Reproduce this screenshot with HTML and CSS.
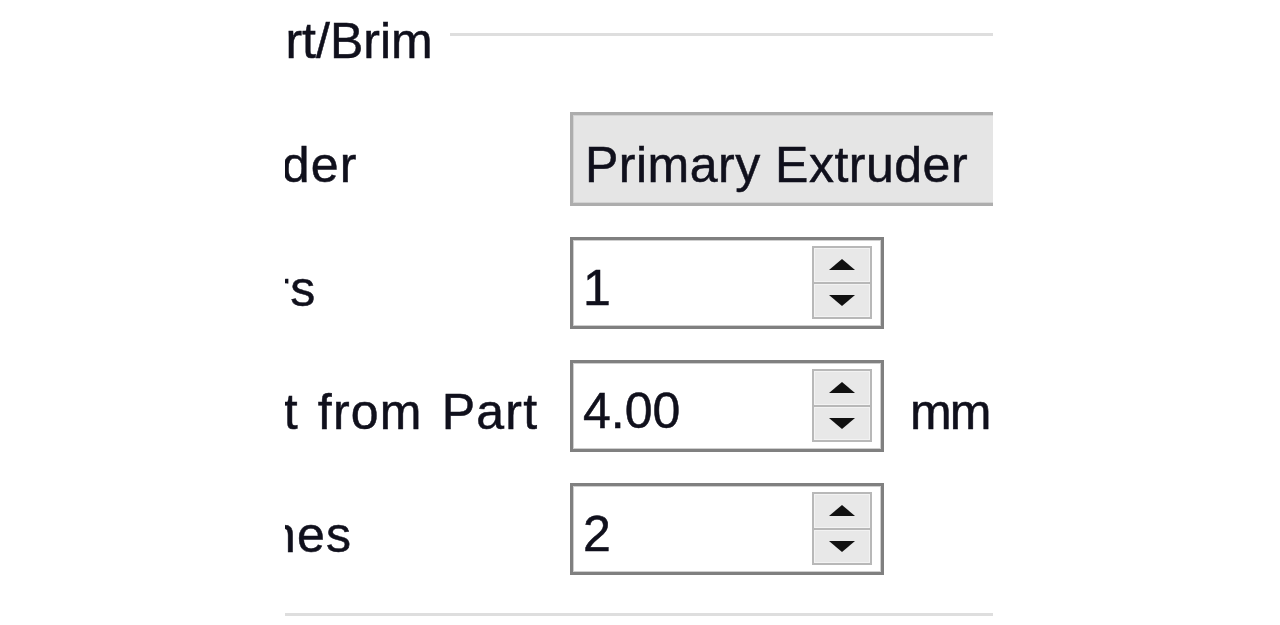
FILE: index.html
```html
<!DOCTYPE html>
<html lang="en">
<head>
    <meta charset="UTF-8">
    <title>Skirt/Brim</title>
    <link rel="stylesheet" href="styles.css">
</head>
<body>
    <div class="viewport">
        <div class="group">
            <div class="group__title">
                <span class="group__label">Skirt/Brim</span>
                <div class="group__rule"></div>
            </div>

            <div class="form">
                <div class="form__label">Skirt Extruder</div>
                <div class="combo">Primary Extruder</div>

                <div class="form__label">Skirt Layers</div>
                <div class="spin">
                    <div class="spin__value">1</div>
                    <div class="spin__buttons">
                        <div class="spin__btn"><span class="arrow arrow--up"></span></div>
                        <div class="spin__btn"><span class="arrow arrow--down"></span></div>
                    </div>
                </div>
                <div></div>

                <div class="form__label">Skirt Offset from Part</div>
                <div class="spin">
                    <div class="spin__value">4.00</div>
                    <div class="spin__buttons">
                        <div class="spin__btn"><span class="arrow arrow--up"></span></div>
                        <div class="spin__btn"><span class="arrow arrow--down"></span></div>
                    </div>
                </div>
                <div class="form__unit">mm</div>

                <div class="form__label">Skirt Outlines</div>
                <div class="spin">
                    <div class="spin__value">2</div>
                    <div class="spin__buttons">
                        <div class="spin__btn"><span class="arrow arrow--up"></span></div>
                        <div class="spin__btn"><span class="arrow arrow--down"></span></div>
                    </div>
                </div>
                <div></div>
            </div>

            <div class="group__bottom"></div>
        </div>
    </div>
</body>
</html>
```

FILE: styles.css
```css
html {
    height: 100%;
}

body {
    margin: 0;
    height: 100%;
    background: #fff;
    color: #10101c;
    font-family: "Liberation Sans", Arial, sans-serif;
    font-size: 50px;
    -webkit-text-stroke: 0.5px currentColor;
    overflow: hidden;
}

.viewport {
    margin-left: 285px;
    width: 708px;
    height: 625px;
    overflow: hidden;
}

.group {
    margin-left: -251px;
    width: 959px;
}

.group__title {
    display: flex;
    align-items: center;
    height: 60px;
    margin-top: 11px;
    padding-left: 182px;
}

.group__label {
    line-height: 60px;
    white-space: nowrap;
}

.group__rule {
    flex: 1;
    height: 3px;
    margin-left: 17px;
    margin-bottom: 14px;
    background: #dedede;
}

.form {
    display: grid;
    grid-template-columns: 536px 314px auto;
    row-gap: 31px;
    align-items: center;
    margin-top: 41px;
}

.form__label {
    white-space: nowrap;
    letter-spacing: 1.2px;
    word-spacing: 4px;
    padding-top: 12px;
}

.form__unit {
    padding-top: 12px;
    padding-left: 26px;
    letter-spacing: -2px;
}

.combo {
    grid-column: 2 / 4;
    box-sizing: border-box;
    width: 440px;
    height: 94px;
    display: flex;
    align-items: center;
    padding: 12px 0 0 12px;
    background: #e5e5e5;
    border: 3px solid #adadad;
    box-shadow: inset 0 0 0 1px #d2d2d2;
    letter-spacing: 0.5px;
    white-space: nowrap;
}

.spin {
    box-sizing: border-box;
    height: 92px;
    display: flex;
    border: 3px solid #808080;
    box-shadow: inset 0 0 0 1px #cfcfcf;
    background: #fff;
}

.spin__value {
    flex: 1;
    display: flex;
    align-items: center;
    padding: 10px 0 0 10px;
}

.spin__buttons {
    box-sizing: border-box;
    width: 60px;
    margin: 6px 9px 7px 0;
    display: flex;
    flex-direction: column;
    gap: 2px;
    padding: 2px;
    background: #b8b8b8;
}

.spin__btn {
    flex: 1;
    display: flex;
    align-items: center;
    justify-content: center;
    background: #e8e8e8;
    box-shadow: inset 0 0 0 1px #f3f3f3;
}

.arrow {
    width: 0;
    height: 0;
    border-left: 13px solid transparent;
    border-right: 13px solid transparent;
}

.arrow--up {
    border-bottom: 11px solid #111;
}

.arrow--down {
    border-top: 11px solid #111;
}

.group__bottom {
    height: 3px;
    margin-top: 38px;
    background: #dedede;
}
```
